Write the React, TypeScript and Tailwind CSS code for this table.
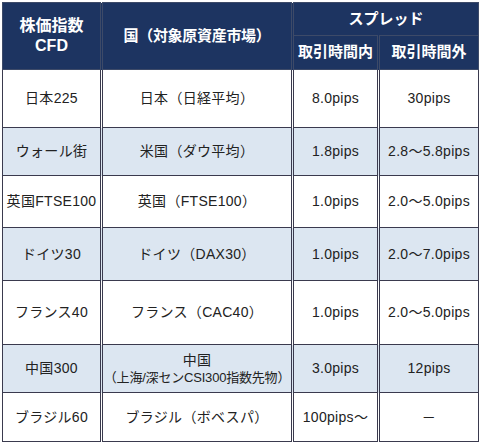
import React from "react";

type Row = { a: string; b: React.ReactNode; c: string; d: string; blue: boolean; h: string };

const rows: Row[] = [
  { a: "日本225", b: "日本（日経平均）", c: "8.0pips", d: "30pips", blue: false, h: "h-[58px]" },
  { a: "ウォール街", b: "米国（ダウ平均）", c: "1.8pips", d: "2.8〜5.8pips", blue: true, h: "h-[48px]" },
  { a: "英国FTSE100", b: "英国（FTSE100）", c: "1.0pips", d: "2.0〜5.0pips", blue: false, h: "h-[52px]" },
  { a: "ドイツ30", b: "ドイツ（DAX30）", c: "1.0pips", d: "2.0〜7.0pips", blue: true, h: "h-[53px]" },
  { a: "フランス40", b: "フランス（CAC40）", c: "1.0pips", d: "2.0〜5.0pips", blue: false, h: "h-[64px]" },
  {
    a: "中国300",
    b: (
      <div className="flex flex-col items-center leading-[18px]">
        <span>中国</span>
        <span className="text-[13px] tracking-[-0.2px] whitespace-nowrap">（上海/深センCSI300指数先物）</span>
      </div>
    ),
    c: "3.0pips",
    d: "12pips",
    blue: true,
    h: "h-[48px]",
  },
  { a: "ブラジル60", b: "ブラジル（ボベスパ）", c: "100pips〜", d: "－", blue: false, h: "h-[49px]" },
];

const th =
  "bg-[#1d3461] text-white font-bold text-[15px] border-y border-x-[3px] border-double border-[#3d4a68] text-center align-middle p-0";
const td =
  "border-y border-x-[3px] border-double border-[#3a3a4e] text-center align-middle p-0 text-[14px] tracking-[0.3px] text-[#222] whitespace-nowrap";

export default function App() {
  return (
    <div
      className="w-[480px] h-[445px] bg-white pt-[2px] pl-[2px]"
      style={{ fontFamily: '"Liberation Sans", "Noto Sans CJK JP", sans-serif' }}
    >
      <table className="table-fixed border-collapse w-[476px] border border-[#3a3a4e]">
        <colgroup>
          <col className="w-[99px]" />
          <col className="w-[191px]" />
          <col className="w-[86px]" />
          <col className="w-[100px]" />
        </colgroup>
        <thead>
          <tr className="h-[33px]">
            <th rowSpan={2} className={th + " border-l leading-[20px] text-[16px]"}>
              株価指数
              <br />
              CFD
            </th>
            <th rowSpan={2} className={th + " tracking-[-0.3px]"}>
              国（対象原資産市場）
            </th>
            <th colSpan={2} className={th + " border-r"}>
              スプレッド
            </th>
          </tr>
          <tr className="h-[34px]">
            <th className={th}>取引時間内</th>
            <th className={th + " border-r"}>取引時間外</th>
          </tr>
        </thead>
        <tbody>
          {rows.map((r, i) => (
            <tr key={i} className={(r.blue ? "bg-[#dce6f1] " : "bg-white ") + r.h}>
              <td className={td + " border-l"}>{r.a}</td>
              <td className={td}>{r.b}</td>
              <td className={td}>{r.c}</td>
              <td className={td + " border-r"}>{r.d}</td>
            </tr>
          ))}
        </tbody>
      </table>
    </div>
  );
}
